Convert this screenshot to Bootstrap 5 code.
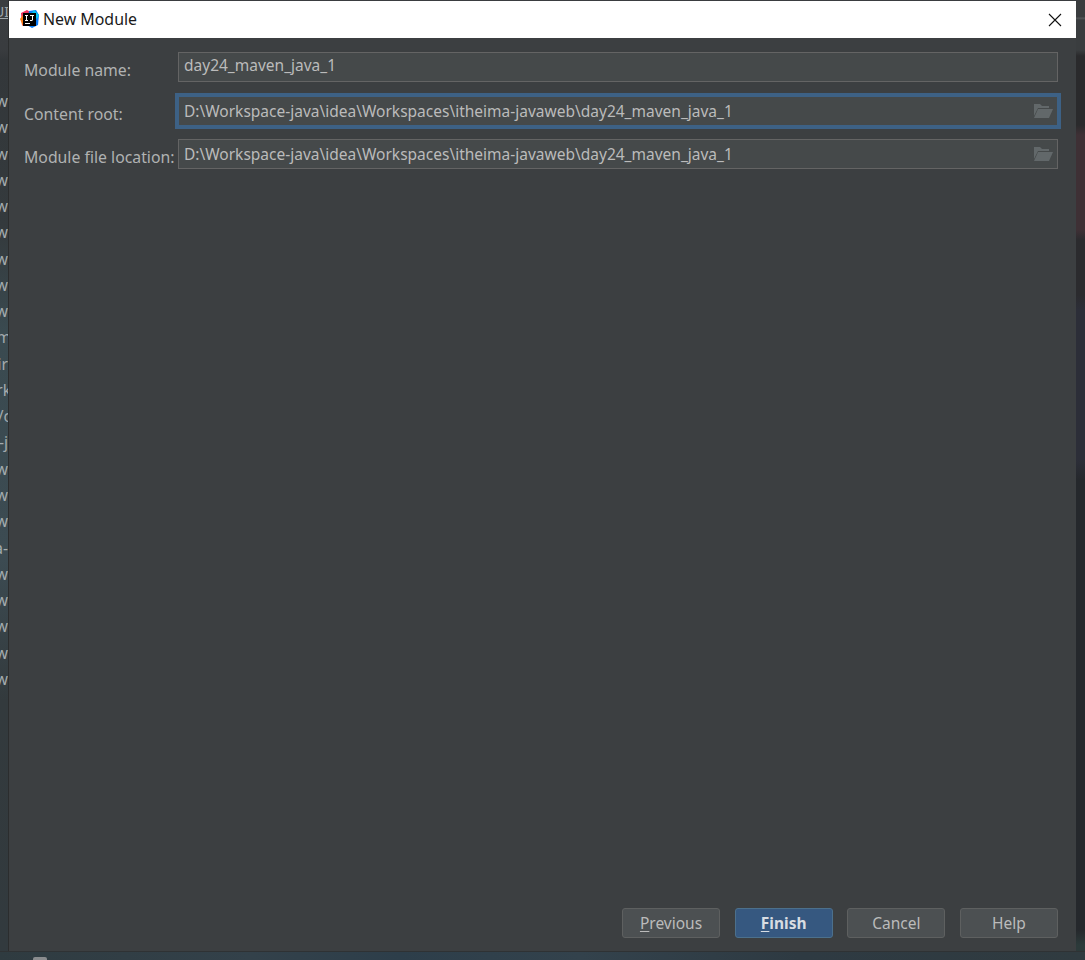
<!DOCTYPE html>
<html lang="en">
<head>
<meta charset="utf-8">
<title>New Module</title>
<link rel="stylesheet" href="https://cdn.jsdelivr.net/npm/bootstrap@5.3.0/dist/css/bootstrap.min.css">
<style>
html,body{height:960px;overflow:hidden}
body{background:#2f3436;font-family:"Noto Sans","Open Sans",sans-serif;font-size:15px;color:#bbb}
.desk{width:1085px;height:960px;background:linear-gradient(180deg,#3a3d40 0,#393c3f 50px,#33373a 60px,#343a3d 230px,#3a4a50 330px,#3c4b52 560px,#333a3d 700px,#323a3e 951px)}
.edge-left{width:9px;padding-top:88px;overflow:hidden;border-right:1px solid #2b2d2e;flex:none;height:951px;position:relative}
.edge-row{height:26.27px;line-height:26.27px;white-space:nowrap;display:flex;justify-content:flex-end;font-size:15.5px;color:#a4abae}
.edge-cut{margin-right:-3px}
.edge-right{width:9px;flex:none;height:951px;background:linear-gradient(180deg,#3a3d3f 0,#3a3d3f 17px,#55585a 18px,#3a3d3f 20px,#3a3d3f 50px,#2a2a2c 56px,#2a2a2c 125px,#3e3035 135px,#3e3035 230px,#2b2b2e 240px,#2b2b2e 295px,#2c2e38 310px,#2c2e38 460px,#25282c 480px,#25282c 930px,#2c3a3a 945px,#2c3a3a 951px)}
.strip-bottom{position:absolute;left:0;top:951px;width:1085px;height:9px;border-top:1px solid #2f3234;background:linear-gradient(90deg,#2f3b40 0,#33414a 250px,#2d3e4a 400px,#33424c 580px,#2e3a42 800px,#303b40 1085px)}
.dlg{width:1067px;height:950px;margin-top:1px;background:#3c3f41;flex:none}
.dlg-title{height:37px;background:#fff;color:#1a1a1a;padding-left:11px;gap:4px;font-size:15.9px}
.dlg-close{width:14px;height:14px;margin-right:14px}
.dlg-body{padding:14px 18px 0 15px;height:870px}
.fld{height:30px;margin-bottom:13.5px}
.fld-lab{width:154px;flex:none;font-size:15.8px;color:#b0b2b2;padding-top:7px;white-space:nowrap}
.fld-box{width:880px;height:30px;background:#45494a;border:1px solid #646464;color:#bbb;padding:0 5px;font-size:15.5px;line-height:24px;white-space:nowrap}
.fld-on{border:none;outline:4px solid #3d6185;outline-offset:-1.5px;padding:0 6px}
.fld-ico{width:20px;height:16px;margin-right:-1px}
.dlg-foot{gap:14.67px;padding-right:18px;height:43px}
.act{width:98px;height:30px;border:1px solid #5e6060;border-radius:3px;background:#4c5052;color:#bbb;font-size:15.5px;padding:0;line-height:26px}
.act-main{background:#365880;border-color:#4c708c;color:#d8dde2;font-weight:700}
.act u{text-underline-offset:2px}
.stub{position:absolute;left:33px;top:957px;width:14px;height:3px;background:#8a8c8e;border-radius:2px 2px 0 0}
.edge-top{position:absolute;left:0;top:5px;width:9px;height:14px;line-height:14px;overflow:hidden;font-size:14px;color:#9fa6a9;white-space:nowrap;display:flex;justify-content:flex-end;text-decoration:underline}
</style>
</head>
<body class="m-0">
<div class="desk d-flex position-relative">
  <div class="edge-left">
    <div class="edge-top">UI</div>
    <div class="edge-row">w</div><div class="edge-row">w</div><div class="edge-row">w</div><div class="edge-row">w</div><div class="edge-row">w</div><div class="edge-row">w</div><div class="edge-row">w</div><div class="edge-row">w</div><div class="edge-row">w</div>
    <div class="edge-row"><span class="edge-cut">m</span></div><div class="edge-row">ir</div><div class="edge-row"><span class="edge-cut">rk</span></div><div class="edge-row"><span class="edge-cut">/c</span></div><div class="edge-row">-j</div>
    <div class="edge-row">w</div><div class="edge-row">w</div><div class="edge-row">w</div><div class="edge-row">a-</div>
    <div class="edge-row">w</div><div class="edge-row">w</div><div class="edge-row">w</div><div class="edge-row">w</div><div class="edge-row">w</div>
  </div>
  <div class="dlg d-flex flex-column">
    <div class="dlg-title d-flex align-items-center">
      <svg width="19" height="19" viewBox="0 0 19 19" aria-hidden="true">
        <path d="M1 3 7 0l5 3-6 8-4 5z" fill="#f0345e"/><path d="M0 9l3-4 4 6-4 5z" fill="#f97a12"/>
        <path d="M9 1l7-1 3 5-1 10-6 3-5-3z" fill="#087cfa"/><path d="M14 0l5 5-2 4-6-5z" fill="#07c3f2"/>
        <rect x="3" y="3" width="13" height="13" fill="#000"/>
        <rect x="5" y="13" width="5" height="1" fill="#fff"/>
        <path d="M5 5h3v1H7v4h1v1H5v-1h1V6H5zM10 5h4v1h-1v4l-1 1h-2v-1h2V6h-2z" fill="#fff"/>
      </svg>
      <span>New Module</span>
      <svg class="dlg-close ms-auto" viewBox="0 0 14 14" aria-hidden="true"><path d="M1 1l12 12M13 1 1 13" stroke="#111" stroke-width="1.1" fill="none"/></svg>
    </div>
    <div class="dlg-body flex-grow-1">
      <div class="fld d-flex">
        <div class="fld-lab">Module name:</div>
        <div class="fld-box">day24_maven_java_1</div>
      </div>
      <div class="fld d-flex">
        <div class="fld-lab">Content root:</div>
        <div class="fld-box fld-on d-flex justify-content-between align-items-center"><span>D:\Workspace-java\idea\Workspaces\itheima-javaweb\day24_maven_java_1</span>
          <svg class="fld-ico" viewBox="0 0 20 16" aria-hidden="true"><path d="M1 1h6l2 2h7v2H5L1 13z" fill="#62686a"/><path d="M5 6h15l-4 9H1z" fill="#62686a"/></svg></div>
      </div>
      <div class="fld d-flex">
        <div class="fld-lab">Module file location:</div>
        <div class="fld-box d-flex justify-content-between align-items-center"><span>D:\Workspace-java\idea\Workspaces\itheima-javaweb\day24_maven_java_1</span>
          <svg class="fld-ico" viewBox="0 0 20 16" aria-hidden="true"><path d="M1 1h6l2 2h7v2H5L1 13z" fill="#62686a"/><path d="M5 6h15l-4 9H1z" fill="#62686a"/></svg></div>
      </div>
    </div>
    <div class="dlg-foot d-flex justify-content-end">
      <button type="button" class="act"><u>P</u>revious</button>
      <button type="button" class="act act-main"><u>F</u>inish</button>
      <button type="button" class="act">Cancel</button>
      <button type="button" class="act">Help</button>
    </div>
  </div>
  <div class="edge-right"></div>
  <div class="strip-bottom"></div>
  <div class="stub"></div>
</div>
<script src="https://cdn.jsdelivr.net/npm/bootstrap@5.3.0/dist/js/bootstrap.bundle.min.js"></script>
</body>
</html>
